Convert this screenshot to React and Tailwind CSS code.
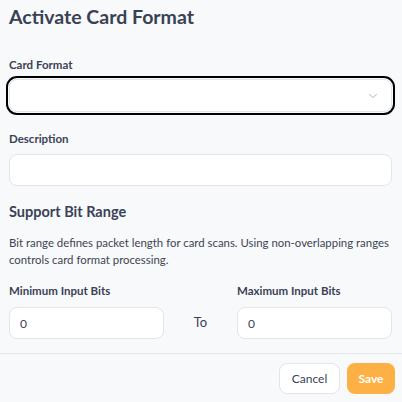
import { ChevronDown } from 'lucide-react';

const inputCls =
  'h-8 w-full rounded-lg border border-[#e3e5e9] bg-white px-[10px] text-[12px] text-[#3b4256] outline-none';

const App = () => {
  return (
    <div
      className="flex h-[402px] w-[402px] flex-col bg-[#f8f9fb] text-[#3b4256]"
      style={{ fontFamily: 'Lato, "Open Sans", sans-serif' }}
    >
      <div className="flex flex-col pl-[9px] pr-[10px]">
        {/* Title */}
        <h1 className="mt-[3px] text-[19.5px] font-bold leading-7 text-[#394254]">Activate Card Format</h1>

        {/* Card format select */}
        <label className="mt-[26px] text-[11.5px] font-bold leading-4">Card Format</label>
        <div className="mt-[6px] flex h-[33px] w-full items-center justify-end rounded-lg border border-[#e3e5e9] bg-white pr-[11px] outline-2 outline-offset-1 outline-black">
          <ChevronDown className="h-[14px] w-[14px] text-[#a3a8b3]" strokeWidth={1.5} />
        </div>

        {/* Description */}
        <label className="mt-[19px] text-[11.5px] font-bold leading-4">Description</label>
        <input className={`mt-[7px] ${inputCls}`} />

        {/* Bit range */}
        <h2 className="mt-[14px] text-[14.5px] font-bold leading-6">Support Bit Range</h2>
        <p className="mt-[10px] text-[11.4px] leading-[17px] text-[#3d4453]">
          Bit range defines packet length for card scans. Using non-overlapping ranges controls card format processing.
        </p>

        <div className="mt-[15px] flex items-end">
          <div className="flex w-[155px] flex-col">
            <label className="text-[11.5px] font-bold leading-4">Minimum Input Bits</label>
            <input className={`mt-2 ${inputCls}`} defaultValue="0" />
          </div>
          <div className="flex h-8 flex-1 items-center justify-center text-[13px]">To</div>
          <div className="flex w-[155px] flex-col">
            <label className="text-[11.5px] font-bold leading-4">Maximum Input Bits</label>
            <input className={`mt-2 ${inputCls}`} defaultValue="0" />
          </div>
        </div>
      </div>

      {/* Footer */}
      <div className="mt-[14px] flex justify-end gap-[7px] border-t border-[#e5e7eb] px-[7px] pt-[9px]">
        <button className="h-[31px] w-[61px] rounded-lg border border-[#e3e5e9] bg-white text-[12px] text-[#3b4256]">
          Cancel
        </button>
        <button className="h-[31px] w-12 rounded-lg bg-[#fdb043] text-[12px] font-bold text-white">Save</button>
      </div>
    </div>
  );
};

export default App;
